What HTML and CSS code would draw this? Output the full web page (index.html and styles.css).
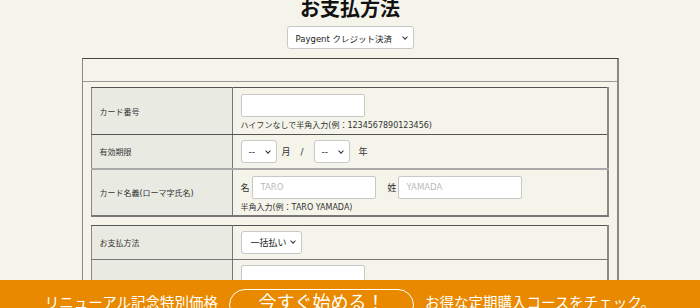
FILE: index.html
```html
<!DOCTYPE html>
<html lang="ja">
<head>
<meta charset="utf-8">
<link rel="stylesheet" href="styles.css">
</head>
<body>
<h1 class="title">お支払方法</h1>
<div class="method">
  <div class="select select-method">Paygent クレジット決済<span class="chev"></span></div>
</div>
<div class="outer">
  <div class="outer-head"></div>
  <div class="outer-body">
    <table class="form">
      <tr class="r1">
        <th>カード番号</th>
        <td>
          <div class="input input-card"></div>
          <div class="note">ハイフンなしで半角入力(例：1234567890123456)</div>
        </td>
      </tr>
      <tr class="r2">
        <th>有効期限</th>
        <td>
          <div class="line">
            <div class="select select-small">--<span class="chev"></span></div>
            <span class="unit">月</span>
            <span class="slash">/</span>
            <div class="select select-small">--<span class="chev"></span></div>
            <span class="unit unit-year">年</span>
          </div>
        </td>
      </tr>
      <tr class="r3">
        <th>カード名義(ローマ字氏名)</th>
        <td>
          <div class="line">
            <span class="name-lbl">名</span>
            <div class="input input-name"><span class="ph">TARO</span></div>
            <span class="name-lbl name-lbl2">姓</span>
            <div class="input input-name"><span class="ph">YAMADA</span></div>
          </div>
          <div class="note">半角入力(例：TARO YAMADA)</div>
        </td>
      </tr>
    </table>
    <table class="form form2">
      <tr class="r4">
        <th>お支払方法</th>
        <td>
          <div class="select select-pay">一括払い<span class="chev"></span></div>
        </td>
      </tr>
      <tr class="r5">
        <th></th>
        <td>
          <div class="input input-card"></div>
        </td>
      </tr>
    </table>
  </div>
</div>
<div class="banner">
  <span class="banner-text">リニューアル記念特別価格</span>
  <span class="banner-btn">今すぐ始める！</span>
  <span class="banner-text banner-text2">お得な定期購入コースをチェック。</span>
</div>
</body>
</html>
```

FILE: styles.css
```css
html, body {
  margin: 0;
  padding: 0;
  background: #f4f4ea;
  font-family: "DejaVu Sans", "Noto Sans CJK JP", sans-serif;
  color: #333;
  height: 308px;
  overflow: hidden;
}
.title {
  margin: 0;
  margin-top: -6px;
  text-align: center;
  font-family: "Noto Sans CJK JP", sans-serif;
  font-size: 20px;
  line-height: 28px;
  font-weight: 700;
  color: #111;
}
.method {
  display: flex;
  justify-content: center;
  margin-top: 4px;
}
.select {
  box-sizing: border-box;
  display: flex;
  align-items: center;
  background: #fff;
  border: 1px solid #c8c8c8;
  border-radius: 3px;
  font-size: 9px;
  color: #222;
  position: relative;
}
.chev {
  position: absolute;
  right: 6px;
  top: 50%;
  width: 3px;
  height: 3px;
  margin-top: -3px;
  border-right: 1.2px solid #333;
  border-bottom: 1.2px solid #333;
  transform: rotate(45deg);
}
.select-method {
  width: 127px;
  height: 23px;
  padding-left: 8px;
  font-size: 8.5px;
}
.outer {
  box-sizing: border-box;
  width: 537px;
  margin: 9px auto 0;
  border-top: 1px solid #444;
  border-left: 1px solid #888;
  border-right: 2px solid #888;
  height: 400px;
}
.outer-head {
  height: 22px;
  border-bottom: 1px solid #999;
}
.outer-body {
  padding: 5px 8px 0 8px;
  display: flex;
  flex-direction: column;
  gap: 8px;
}
.form {
  width: 100%;
  border-collapse: collapse;
  border-top: 1px solid #555;
  border-left: 1px solid #888;
  border-right: 2px solid #888;
  border-bottom: 2px solid #777;
}
.form th {
  width: 141px;
  box-sizing: border-box;
  background: #e9ebe2;
  text-align: left;
  font-weight: 400;
  font-size: 8px;
  padding: 0 0 0 8px;
  border-right: 1px solid #777;
  color: #333;
}
.form td {
  padding: 0 0 0 8px;
  vertical-align: top;
}
.r1 { height: 47px; }
.r1 th, .r1 td { border-bottom: 1px solid #555; }
.r1 td { padding-top: 6px; }
.r2 { height: 34px; }
.r2 th, .r2 td { border-bottom: 2px solid #aaa; }
.r2 td { padding-top: 5px; }
.r3 { height: 47px; }
.r3 td { padding-top: 6px; }
.r4 { height: 34px; }
.r4 th, .r4 td { border-bottom: 1px solid #777; }
.r4 td { padding-top: 5px; }
.r5 { height: 40px; }
.r5 td { padding-top: 5px; }
.input {
  box-sizing: border-box;
  background: #fff;
  border: 1px solid #c8c8c8;
  border-radius: 2px;
  height: 23px;
  display: flex;
  align-items: center;
}
.input-card { width: 124px; }
.input-name { width: 124px; }
.ph {
  color: #bbb;
  font-size: 8.5px;
  padding-left: 8px;
}
.note {
  font-size: 8px;
  margin-top: 2px;
  color: #333;
  white-space: nowrap;
}
.line {
  display: flex;
  align-items: center;
}
.select-small {
  width: 36px;
  height: 23px;
  padding-left: 7px;
}
.unit {
  font-size: 9px;
  margin-left: 5px;
}
.slash {
  font-size: 9px;
  margin-left: 10px;
  margin-right: 10px;
}
.unit-year { margin-left: 9px; }
.name-lbl {
  font-size: 9px;
  margin-right: 2px;
}
.name-lbl2 { margin-left: 12px; margin-right: 1px; }
.select-pay {
  width: 61px;
  height: 23px;
  padding-left: 9px;
  font-size: 9px;
}
.banner {
  position: fixed;
  left: 0;
  right: 0;
  top: 280px;
  height: 40px;
  background: #e98900;
  display: flex;
  justify-content: center;
  align-items: flex-start;
  color: #fff;
  padding-top: 9px;
  box-sizing: border-box;
  font-family: "Noto Sans CJK JP", sans-serif;
}
.banner-text {
  font-size: 14.5px;
  line-height: 22px;
  margin-top: 2px;
}
.banner-btn {
  box-sizing: border-box;
  width: 185px;
  height: 32px;
  border: 1.5px solid #fff;
  border-radius: 16px;
  margin: 0 11px;
  text-align: center;
  font-size: 18px;
  line-height: 22px;
}
```
